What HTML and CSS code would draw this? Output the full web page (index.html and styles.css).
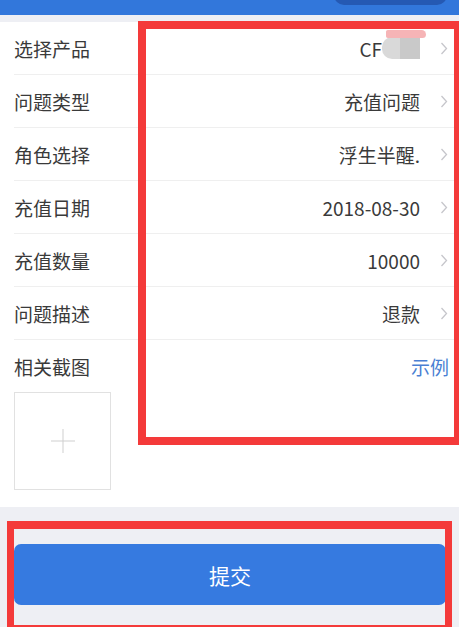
FILE: index.html
```html
<!DOCTYPE html>
<html>
  <head>
    <meta charset="utf-8" />
    <meta name="viewport" content="width=device-width, initial-scale=1.0" />
    <link rel="stylesheet" href="styles.css">
  </head>

  <body>
    <div class="topbar">
      <div class="pill"></div>
    </div>

    <div id="form">
      <div class="row">
        <span class="label">选择产品</span>
        <span class="value">CF<span class="mask"></span></span>
        <svg class="arrow" width="8" height="13" viewBox="0 0 8 13"><polyline points="1.5,1 6.5,6.5 1.5,12" /></svg>
      </div>
      <div class="row">
        <span class="label">问题类型</span>
        <span class="value">充值问题</span>
        <svg class="arrow" width="8" height="13" viewBox="0 0 8 13"><polyline points="1.5,1 6.5,6.5 1.5,12" /></svg>
      </div>
      <div class="row">
        <span class="label">角色选择</span>
        <span class="value">浮生半醒.</span>
        <svg class="arrow" width="8" height="13" viewBox="0 0 8 13"><polyline points="1.5,1 6.5,6.5 1.5,12" /></svg>
      </div>
      <div class="row">
        <span class="label">充值日期</span>
        <span class="value">2018-08-30</span>
        <svg class="arrow" width="8" height="13" viewBox="0 0 8 13"><polyline points="1.5,1 6.5,6.5 1.5,12" /></svg>
      </div>
      <div class="row">
        <span class="label">充值数量</span>
        <span class="value">10000</span>
        <svg class="arrow" width="8" height="13" viewBox="0 0 8 13"><polyline points="1.5,1 6.5,6.5 1.5,12" /></svg>
      </div>
      <div class="row">
        <span class="label">问题描述</span>
        <span class="value">退款</span>
        <svg class="arrow" width="8" height="13" viewBox="0 0 8 13"><polyline points="1.5,1 6.5,6.5 1.5,12" /></svg>
      </div>
      <div class="row last">
        <span class="label">相关截图</span>
        <span class="sample">示例</span>
      </div>
      <div class="upload">
        <svg width="26" height="26" viewBox="0 0 26 26"><path d="M13 1 V25 M1 13 H25" /></svg>
      </div>
    </div>

    <div class="footer">
      <button id="submit">提交</button>
    </div>

    <!-- annotation frames drawn over the screenshot -->
    <div class="mark markTop"></div>
    <div class="blot"></div>
    <div class="mark markBottom"></div>
  </body>
</html>
```

FILE: styles.css
```css
html {
  font-family: "Noto Sans CJK SC", "Noto Sans", "Liberation Sans", sans-serif;
}

body {
  margin: 0;
  width: 459px;
  height: 627px;
  overflow: hidden;
  background-color: #eeeff4;
  position: relative;
}

.topbar {
  height: 15px;
  background-color: #3277db;
  display: flex;
  justify-content: flex-end;
  overflow: hidden;
}

.pill {
  width: 113px;
  height: 20px;
  margin: -15px 12px 0 0;
  border-radius: 10px;
  background-color: #2559b3;
}

#form {
  margin-top: 7px;
  background-color: #fff;
  padding-left: 14px;
  padding-bottom: 17px;
}

.row {
  height: 53px;
  box-sizing: border-box;
  border-bottom: 1px solid #efefef;
  display: flex;
  align-items: center;
  padding-right: 11px;
  font-size: 19px;
}

.row.last {
  border-bottom: none;
  height: 52px;
}

.label {
  flex: 1;
  color: #3a3a3a;
}

.value {
  color: #3a3a3a;
  display: flex;
  align-items: center;
}

.mask {
  display: inline-block;
  width: 38px;
  height: 22px;
  background: linear-gradient(90deg, #d9d9d9 0%, #d9d9d9 48%, #c9c9c9 48%, #c9c9c9 100%);
  border-radius: 10px 0 0 10px;
}

.arrow {
  margin-left: 20px;
  fill: none;
  stroke: #c6c6cb;
  stroke-width: 1.3;
}

.sample {
  color: #4a7fd3;
  margin-right: -1px;
}

.upload {
  width: 97px;
  height: 98px;
  box-sizing: border-box;
  border: 1px solid #e1e1e1;
  display: flex;
  align-items: center;
  justify-content: center;
}

.upload path {
  stroke: #cfcfcf;
  stroke-width: 1;
  fill: none;
}

.footer {
  padding: 37px 13px 0 14px;
}

#submit {
  width: 100%;
  height: 61px;
  border: none;
  border-radius: 7px;
  background-color: #367ae0;
  color: #fff;
  font: inherit;
  font-size: 21px;
  padding: 0;
}

.mark {
  position: absolute;
  border: 8px solid #f43a3a;
  box-sizing: border-box;
}

.markTop {
  left: 138px;
  top: 21px;
  width: 326px;
  height: 424px;
  border-right-width: 10px;
}

.markBottom {
  left: 7px;
  top: 521px;
  width: 445px;
  height: 112px;
  border-width: 8px 7px;
}

.blot {
  position: absolute;
  left: 386px;
  top: 30px;
  width: 40px;
  height: 8px;
  border-radius: 4px 10px 8px 4px;
  background-color: #f6b4b6;
}
```
